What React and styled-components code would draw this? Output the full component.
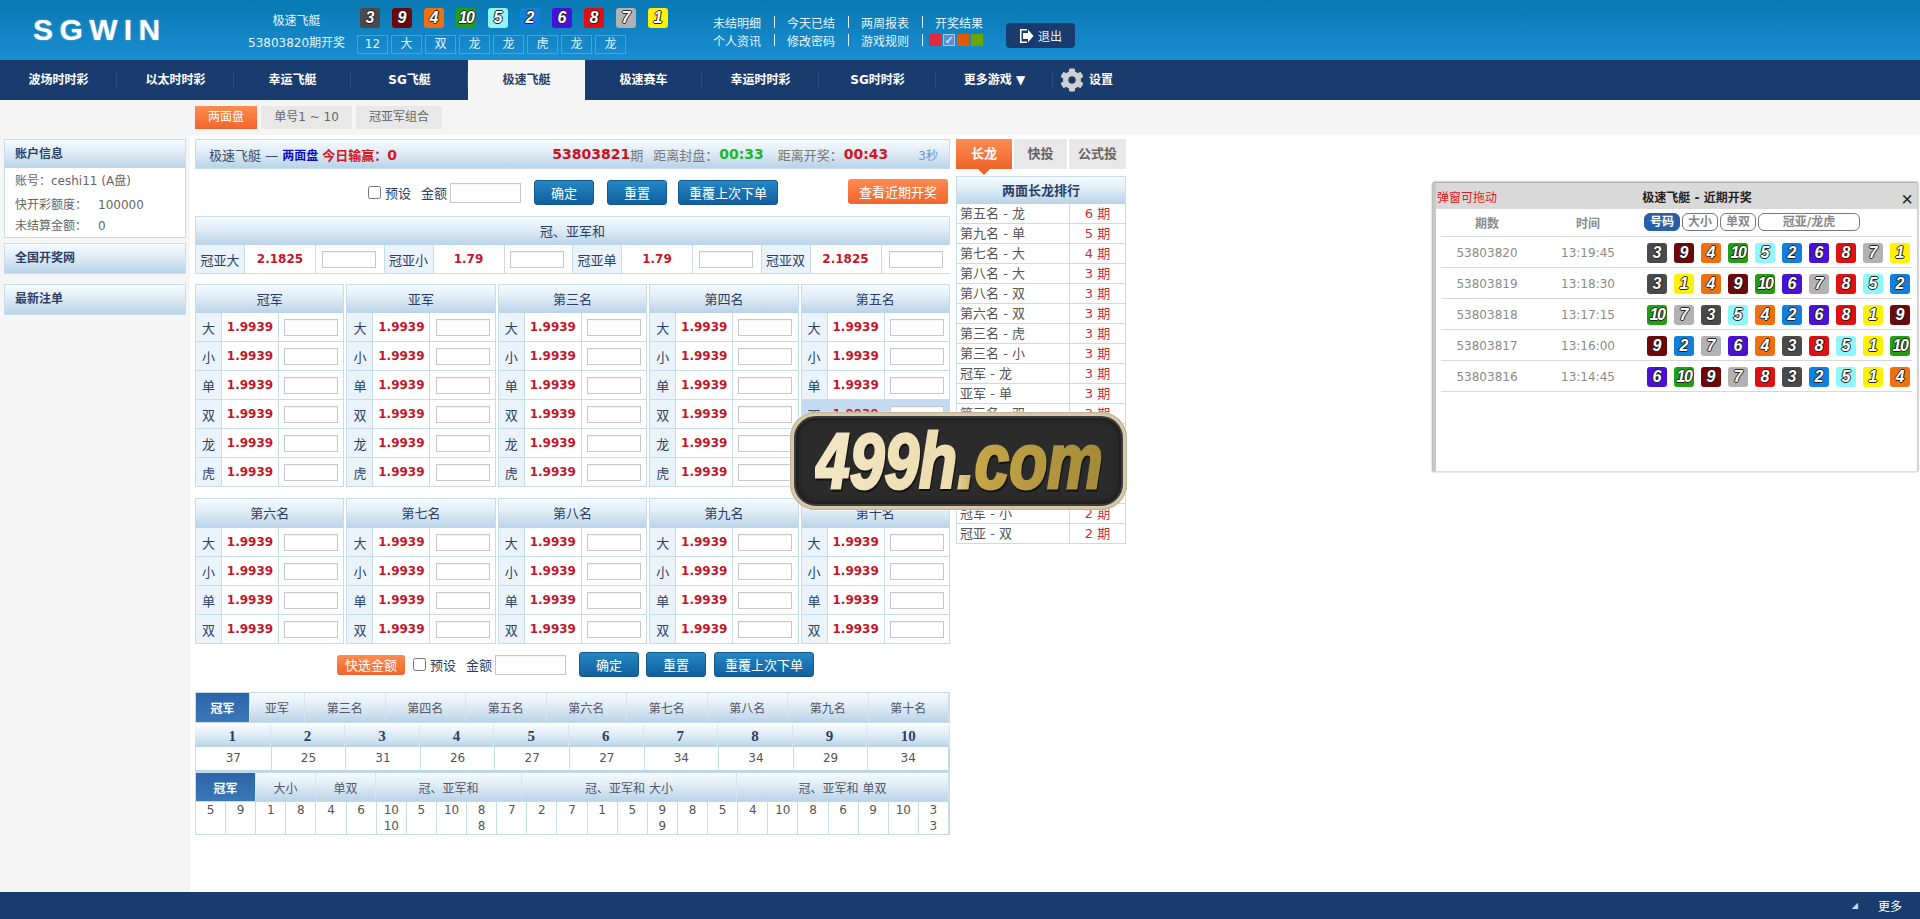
import React from 'react';
import styled, { createGlobalStyle } from 'styled-components';
import { FaCog } from 'react-icons/fa';

const Global = createGlobalStyle`
  html, body { margin: 0; padding: 0; background: #fff; }
  body { font-family: "DejaVu Sans", "Noto Sans CJK SC", sans-serif; font-size: 12px; color: #444; overflow: hidden; }
  * { box-sizing: border-box; }
`;

const HEAD_GRAD = 'linear-gradient(to bottom, #f6fbfe 0%, #dfecf6 45%, #b9d3e8 100%)';
const LINE = '#c5dcea';
const NAVY = '#1a3b6d';
const TITLE = '#2b3f66';
const ODD = '#c4162a';

const Page = styled.div`position: relative; width: 1920px; height: 919px; display: flex; flex-direction: column; overflow: hidden;`;
const TopBar = styled.header`height: 60px; flex: none; display: flex; background: linear-gradient(to bottom, #0778b1, #1b8ed2); color: #e6f4fc;`;
const Logo = styled.div`width: 215px; margin-left: 33px; font: bold 30px/60px "Liberation Sans", sans-serif; letter-spacing: 6.4px; color: #fff; text-shadow: 0 0 2px rgba(255,255,255,.5);`;
const DrawInfo = styled.div`width: 97px; text-align: center; white-space: nowrap; padding-top: 10px; line-height: 22px; font-size: 12px;`;
const DrawBox = styled.div`width: 311px; margin-left: 12px;`;
const BallRow = styled.div`display: flex; gap: 12px; padding: 8px 0 0 3px;`;
const ResultRow = styled.div`display: flex; gap: 3px; margin-top: 7px;`;
const ResultCell = styled.div`width: 31px; height: 19px; border: 1px solid #4aa3d8; text-align: center; line-height: 17px; font-size: 12px;`;
const Links = styled.div`margin-left: 45px; width: 272px; padding-top: 13px;`;
const LinkRow = styled.div`display: flex; align-items: center; height: 18px; font-size: 12px; white-space: nowrap;`;
const Sep = styled.i`width: 1px; height: 12px; background: #dff0fa; margin: 0 12.5px; flex: none;`;
const Swatches = styled.div`display: flex; gap: 2px; margin-left: -6px;`;
const Swatch = styled.span`width: 12px; height: 12px; background: ${p => p.$c}; color: #fff; font-size: 11px; line-height: 12px; text-align: center; border: ${p => p.$on ? '1px solid #a9c9ea' : '0'};`;
const Logout = styled.button`margin: 23px 0 0 21px; width: 69px; height: 25px; border: 0; border-radius: 4px; background: ${NAVY}; color: #e6f4fc; font: 12px "DejaVu Sans","Noto Sans CJK SC",sans-serif; display: flex; align-items: center; justify-content: center; gap: 4px; padding: 0;`;

const Nav = styled.nav`height: 40px; flex: none; display: flex; background: ${NAVY};`;
const NavItem = styled.div`width: 117px; text-align: center; line-height: 40px; font-weight: bold; font-size: 12px; color: ${p => p.$active ? TITLE : '#fff'}; background: ${p => p.$active ? '#f5f5f5' : 'transparent'}; position: relative;
  &::after { content: ''; position: absolute; right: 0; top: 12px; height: 16px; width: 1px; background: ${p => p.$active ? 'transparent' : '#2a4c80'}; }`;
const NavSetting = styled.div`display: flex; align-items: center; gap: 5px; margin-left: 7px; padding-bottom: 1px; color: #fff; font-weight: bold; font-size: 12px;`;
const SettingText = styled.span`margin-top: -2px;`;

const SubBar = styled.div`height: 35px; flex: none; background: #f5f5f5; display: flex; gap: 4px; padding: 6px 0 0 195px;`;
const SubTab = styled.div`height: 23px; width: ${p => p.$w}px; line-height: 23px; text-align: center; font-size: 12px; color: ${p => p.$active ? '#fff' : '#666'}; background: ${p => p.$active ? 'linear-gradient(to bottom,#ff8c50,#f0652c)' : '#e8e8e8'};`;

const Body = styled.div`flex: 1; display: flex; min-height: 0;`;
const Side = styled.aside`width: 190px; flex: none; background: #f5f5f5; padding: 4px 4px 0;`;
const SidePanel = styled.section`margin-bottom: ${p => p.$mb}px; border: 1px solid ${LINE}; background: #fff;`;
const SideHead = styled.div`height: ${p => p.$h}px; line-height: ${p => p.$h}px; padding-left: 10px; background: ${HEAD_GRAD}; color: ${TITLE}; font-weight: bold; font-size: 12px;`;
const SideRow = styled.div`height: ${p => p.$h}px; line-height: ${p => p.$h}px; padding-left: 10px; color: #666; white-space: nowrap;`;
const SideValue = styled.span`margin-left: ${p => p.$ml}px;`;

const Main = styled.main`width: 755px; flex: none; margin-left: 5px; padding-top: 4px;`;
const InfoBar = styled.div`height: 30px; display: flex; align-items: center; padding: 0 11px 0 13px; background: ${HEAD_GRAD}; border: 1px solid ${LINE}; white-space: nowrap; font-size: 13px; color: #3c4c66;`;
const Blue = styled.b`color: #0a0ac8; font-size: 12px; margin: 0 4px;`;
const RedB = styled.b`color: #d81420;`;
const RedBig = styled.span`font-size: 14px;`;
const Period = styled.b`color: #c81420; font-size: 14px; margin-left: auto;`;
const Muted = styled.span`color: #777; font-size: 13px; margin-left: ${p => p.$ml || 0}px;`;
const Clock = styled.b`font-size: 14px; color: ${p => p.$c}; margin: 0 0 0 1px;`;
const Sec = styled.span`color: #6e95d0; font-size: 12px; margin-left: 30px;`;

const Controls = styled.div`display: flex; align-items: center; height: ${p => p.$h}px; padding: ${p => p.$pad}; font-size: 13px; color: ${TITLE}; white-space: nowrap;`;
const Check = styled.input.attrs({ type: 'checkbox' })`margin: 0 4px 0 0; width: 13px; height: 13px;`;
const Amount = styled.span`margin: 0 3px 0 10px;`;
const Field = styled.input`width: ${p => p.$w || 54}px; height: ${p => p.$h || 17}px; padding: 0; border: 1px solid #c8c8c8; background: #fff; box-shadow: inset 0 1px 1px rgba(0,0,0,.05); display: block;`;
const Btn = styled.button`width: ${p => p.$w}px; height: 25px; margin-left: ${p => p.$ml}px; padding: 0; border: 1px solid #14588c; border-radius: 3px; background: linear-gradient(to bottom,#2387c4,#125f9f); color: #fff; font: 13px "DejaVu Sans","Noto Sans CJK SC",sans-serif;`;
const OrangeBtn = styled.button`width: ${p => p.$w}px; height: ${p => p.$h}px; margin: ${p => p.$m}; padding: 0; border: 0; border-radius: 3px; background: linear-gradient(to bottom,#ff8b50,#f0652c); color: #fff; font: 13px "DejaVu Sans","Noto Sans CJK SC",sans-serif;`;

const THead = styled.div`height: ${p => p.$h || 29}px; line-height: ${p => p.$h || 29}px; text-align: center; background: ${HEAD_GRAD}; color: ${TITLE}; font-size: 13px; border: 1px solid ${LINE}; border-bottom: 0;`;
const SumRow = styled.div`display: grid; grid-template-columns: repeat(4, 49px 71px 68.5px); height: 29px; border: 1px solid ${LINE}; border-top: 0;`;
const Label = styled.div`display: flex; align-items: center; justify-content: center; background: #eaf3fa; color: ${TITLE}; font-size: 13px; border-right: 1px solid ${LINE}; white-space: nowrap;`;
const Odds = styled.div`display: flex; align-items: center; justify-content: center; color: ${ODD}; font-weight: bold; font-size: 12px; border-right: 1px solid ${LINE}; background: ${p => p.$hover ? '#c4daf0' : '#fff'};`;
const InputCell = styled.div`display: flex; align-items: center; justify-content: center; padding-right: ${p => p.$end ? 0 : 2}px; border-right: ${p => p.$end ? 0 : `1px solid ${LINE}`}; background: ${p => p.$hover ? '#c4daf0' : '#fff'};`;
const Ranks = styled.div`display: flex; gap: 2px; margin-top: ${p => p.$mt}px;`;
const RankCol = styled.div`flex: 1; min-width: 0;`;
const RankRow = styled.div`display: grid; grid-template-columns: 26px 57px 1fr; height: 29px; border: 1px solid ${LINE}; border-top: 0; ${p => p.$hover ? 'background:#c4daf0;' : ''}`;
const RankLabel = styled(Label)`background: ${p => p.$hover ? '#c4daf0' : '#eaf3fa'};`;

const TabStrip = styled.div`display: grid; grid-template-columns: ${p => p.$cols}; height: ${p => p.$h}px; background: ${HEAD_GRAD}; border: 1px solid ${LINE};`;
const StripTab = styled.div`display: flex; align-items: center; justify-content: center; font-size: 12px; color: ${p => p.$active ? '#fff' : '#556'}; font-weight: ${p => p.$active ? 'bold' : 'normal'}; background: ${p => p.$active ? 'linear-gradient(to bottom,#2c65a8,#3b78b8)' : 'transparent'}; border-right: 1px solid #d5e4f0;`;
const NumHead = styled.div`display: grid; grid-template-columns: 75.6px repeat(8, 74.6px) 1fr; height: 22px; margin-top: 2px; background: ${HEAD_GRAD};`;
const NumCell = styled.div`text-align: center; font: bold 15px/22px "Liberation Serif", serif; color: ${TITLE}; border-right: 1px solid #d5e4f0;`;
const ValRow = styled.div`display: grid; grid-template-columns: 75.6px repeat(8, 74.6px) 1fr; height: 25px; border-bottom: 2px solid #bcd7ec; border-left: 1px solid ${LINE}; border-right: 1px solid ${LINE};`;
const ValCell = styled.div`text-align: center; line-height: 22px; font-size: 12px; color: #555; border-right: 1px solid ${LINE};`;
const Road = styled.div`display: grid; grid-template-columns: repeat(25, 1fr); height: 33px; border: 1px solid ${LINE}; border-top: 0;`;
const RoadCell = styled.div`text-align: center; line-height: 16px; font-size: 12px; color: #555; border-right: 1px solid ${LINE}; white-space: pre-line;`;

const Right = styled.aside`width: 170px; flex: none; margin-left: 6px; padding-top: 4px;`;
const RightTabs = styled.div`display: flex; gap: 2px; height: 30px; margin-bottom: 7px;`;
const RightTab = styled.div`position: relative; width: ${p => p.$w}px; line-height: 30px; text-align: center; font-weight: bold; font-size: 13px; color: ${p => p.$active ? '#fff' : '#666'}; background: ${p => p.$active ? 'linear-gradient(to bottom,#ff8c50,#ef642b)' : '#e8e8e8'};
  ${p => p.$active ? `&::after { content:''; position:absolute; left:50%; bottom:-6px; margin-left:-6px; border:6px solid transparent; border-bottom:0; border-top-color:#ef642b; }` : ''}`;
const RightHead = styled(THead)`font-weight: bold; height: 28px; line-height: 28px;`;
const LongRow = styled.div`display: grid; grid-template-columns: 113px 1fr; height: 20px; line-height: 19px; border: 1px solid ${LINE}; border-top: 0; font-size: 13px;`;
const LongName = styled.div`padding-left: 3px; color: #555; border-right: 1px solid ${LINE}; white-space: nowrap;`;
const LongVal = styled.div`text-align: center; color: #c83040;`;

const Foot = styled.footer`height: 27px; flex: none; background: ${NAVY}; color: #fff; display: flex; align-items: center; justify-content: flex-end; padding-right: 18px; font-size: 12px;`;
const FootMark = styled.span`margin-right: 20px; color: #cfe0f0; font-size: 8px;`;

const BALL = { 1:'#fff200', 2:'#0f7fe0', 3:'#4a4a4a', 4:'#f07010', 5:'#8ff6fb', 6:'#4a10d8', 7:'#b2b2b2', 8:'#e01010', 9:'#6e0808', 10:'#20a010' };
const Ball = styled.span`width: 20px; height: 20px; flex: none; border-radius: 3px; background: ${p => BALL[p.$n]}; color: #fff; text-align: center;
  font: italic bold 16px/20px "Liberation Sans", sans-serif; letter-spacing: ${p => p.$n === 10 ? '-1.5px' : 0};
  text-shadow: 1px 0 0 #222, -1px 0 0 #222, 0 1px 0 #222, 0 -1px 0 #222;`;

const Popup = styled.div`position: absolute; left: 1433px; top: 183px; width: 485px; height: 289px; background: #fff; border-left: 3px solid #c8c8c8; border-right: 1px solid #ccc; border-bottom: 1px solid #ddd; box-shadow: 0 -1px 2px rgba(0,0,0,.4), -1px 0 2px rgba(0,0,0,.2);`;
const PopTitle = styled.div`display: grid; grid-template-columns: 1fr auto 1fr; align-items: center; height: 26px; background: #d9d9d9; padding: 0 4px 0 1px;`;
const PopDrag = styled.span`color: #e02020; font-size: 12px;`;
const PopName = styled.b`color: #222; font-size: 12px; margin: 0 -7px 0 37px;`;
const PopClose = styled.span`justify-self: end; color: #222; font: 20px/20px "Liberation Sans", sans-serif; margin-top: 6px;`;
const PopGrid = styled.div`margin: 0 5px;`;
const PopLine = styled.div`display: flex; align-items: center; height: ${p => p.$h}px; padding-top: ${p => p.$pt || 0}px; border-bottom: 1px solid #d8d8d8;`;
const PopPeriod = styled.div`width: 92px; flex: none; text-align: center; color: #8a8a8a; font-weight: ${p => p.$b ? 'bold' : 'normal'};`;
const PopTime = styled.div`width: 110px; flex: none; text-align: center; color: #8a8a8a; font-weight: ${p => p.$b ? 'bold' : 'normal'};`;
const PopBalls = styled.div`display: flex; gap: 7px; margin-left: 4px;`;
const PopBtns = styled.div`display: flex; gap: 2px; margin: -1px 0 0 1px;`;
const PopBtn = styled.div`width: ${p => p.$w}px; height: 18px; line-height: 16px; border: 1px solid ${p => p.$active ? '#2a5fa8' : '#777'}; border-radius: 6px; text-align: center; font-size: 12px; font-weight: bold; color: ${p => p.$active ? '#fff' : '#888'}; background: ${p => p.$active ? '#2a5fa8' : '#fff'};`;

const Mark = styled.div`position: absolute; left: 790px; top: 412px; width: 337px; height: 98px; border-radius: 26px; background: #d9c9ac; padding: 4px; box-shadow: 0 0 2px #fff, inset 0 0 2px #8c7a5c;`;
const MarkInner = styled.div`width: 100%; height: 100%; border-radius: 22px; background: #2b2b2b; border: 2px solid #3c3c3c; box-shadow: inset 0 0 6px #111; display: flex; align-items: center; justify-content: center; overflow: hidden;`;
const MarkText = styled.span`display: block; white-space: nowrap; font: italic bold 78px/90px "Liberation Sans", sans-serif; transform: scaleX(.8); -webkit-text-stroke: 3px transparent; background: linear-gradient(90deg,#f3e6c4 0%,#ecdcae 48%,#c5a648 56%,#a48a38 100%); -webkit-background-clip: text; background-clip: text; color: transparent; filter: drop-shadow(1px 2px 0 #111);`;

const Odd = '1.9939';
const Rank = ({ name, rows, headH, hoverIdx }) => (
  <RankCol>
    <THead $h={headH}>{name}</THead>
    {rows.map((r, i) => (
      <RankRow key={r} $hover={hoverIdx === i}>
        <RankLabel $hover={hoverIdx === i}>{r}</RankLabel>
        <Odds $hover={hoverIdx === i}>{Odd}</Odds>
        <InputCell $end $hover={hoverIdx === i}><Field /></InputCell>
      </RankRow>
    ))}
  </RankCol>
);

const six = ['大','小','单','双','龙','虎'];
const four = ['大','小','单','双'];
const long = [['第五名 - 龙',6],['第九名 - 单',5],['第七名 - 大',4],['第八名 - 大',3],['第八名 - 双',3],['第六名 - 双',3],['第三名 - 虎',3],['第三名 - 小',3],['冠军 - 龙',3],['亚军 - 单',3],['第三名 - 双',3],['第四名 - 大',2],['第四名 - 龙',2],['第六名 - 小',2],['亚军 - 虎',2],['冠军 - 小',2],['冠亚 - 双',2]];
const draws = [
  ['53803820','13:19:45',[3,9,4,10,5,2,6,8,7,1]],
  ['53803819','13:18:30',[3,1,4,9,10,6,7,8,5,2]],
  ['53803818','13:17:15',[10,7,3,5,4,2,6,8,1,9]],
  ['53803817','13:16:00',[9,2,7,6,4,3,8,5,1,10]],
  ['53803816','13:14:45',[6,10,9,7,8,3,2,5,1,4]],
];
const road = ['5','9','1','8','4','6','10\n10','5','10','8\n8','7','2','7','1','5','9\n9','8','5','4','10','8','6','9','10','3\n3'];
const sumCells = [['冠亚大','2.1825'],['冠亚小','1.79'],['冠亚单','1.79'],['冠亚双','2.1825']];

const ExitIcon = () => (
  <svg width="15" height="16" viewBox="0 0 15 16"><path d="M1 1h7v1.5H2.5v11H8V15H1z" fill="#fff" /><path d="M4 5h5V1.5L14.5 8 9 14.500V11H4z" fill="#fff" /></svg>
);

export default function App() {
  return (
    <Page>
      <Global />
      <TopBar>
        <Logo>SGWIN</Logo>
        <DrawInfo>极速飞艇<br />53803820期开奖</DrawInfo>
        <DrawBox>
          <BallRow>{[3,9,4,10,5,2,6,8,7,1].map(n => <Ball key={n} $n={n}>{n}</Ball>)}</BallRow>
          <ResultRow>{['12','大','双','龙','龙','虎','龙','龙'].map((t, i) => <ResultCell key={i}>{t}</ResultCell>)}</ResultRow>
        </DrawBox>
        <Links>
          <LinkRow>未结明细<Sep />今天已结<Sep />两周报表<Sep />开奖结果</LinkRow>
          <LinkRow>个人资讯<Sep />修改密码<Sep />游戏规则<Sep />
            <Swatches>
              <Swatch $c="#e0283e" />
              <Swatch $c="#5b8fd0" $on>✓</Swatch>
              <Swatch $c="#e05a00" />
              <Swatch $c="#6aa800" />
            </Swatches>
          </LinkRow>
        </Links>
        <Logout><ExitIcon />退出</Logout>
      </TopBar>
      <Nav>
        {['波场时时彩','以太时时彩','幸运飞艇','SG飞艇','极速飞艇','极速赛车','幸运时时彩','SG时时彩','更多游戏 ▼'].map(t => (
          <NavItem key={t} $active={t === '极速飞艇'}>{t}</NavItem>
        ))}
        <NavSetting><FaCog size={24} color="#d0d0d0" /><SettingText>设置</SettingText></NavSetting>
      </Nav>
      <SubBar>
        <SubTab $active $w={62}>两面盘</SubTab>
        <SubTab $w={91}>单号1 ~ 10</SubTab>
        <SubTab $w={86}>冠亚军组合</SubTab>
      </SubBar>
      <Body>
        <Side>
          <SidePanel $mb={5}>
            <SideHead $h={28}>账户信息</SideHead>
            <SideRow $h={26}>账号：ceshi11 (A盘)</SideRow>
            <SideRow $h={22}>快开彩额度：<SideValue $ml={11}>100000</SideValue></SideRow>
            <SideRow $h={21}>未结算金额：<SideValue $ml={11}>0</SideValue></SideRow>
          </SidePanel>
          <SidePanel $mb={10}><SideHead $h={29}>全国开奖网</SideHead></SidePanel>
          <SidePanel $mb={0}><SideHead $h={29}>最新注单</SideHead></SidePanel>
        </Side>
        <Main>
          <InfoBar>
            极速飞艇 — <Blue>两面盘</Blue><RedB>今日输赢：<RedBig>0</RedBig></RedB>
            <Period>53803821</Period><Muted>期</Muted>
            <Muted $ml={10}>距离封盘：</Muted><Clock $c="#1fb52c">00:33</Clock>
            <Muted $ml={14}>距离开奖：</Muted><Clock $c="#d81420">00:43</Clock>
            <Sec>3秒</Sec>
          </InfoBar>
          <Controls $h={47} $pad="0 0 0 173px">
            <Check />预设<Amount>金额</Amount><Field $w={71} $h={20} />
            <Btn $w={60} $ml={13}>确定</Btn>
            <Btn $w={60} $ml={13}>重置</Btn>
            <Btn $w={100} $ml={11}>重覆上次下单</Btn>
            <OrangeBtn $w={100} $h={25} $m="-2px 2px 0 auto">查看近期开奖</OrangeBtn>
          </Controls>
          <THead>冠、亚军和</THead>
          <SumRow>
            {sumCells.map(([l, o], i) => (
              <React.Fragment key={l}>
                <Label>{l}</Label>
                <Odds>{o}</Odds>
                <InputCell $end={i === 3}><Field /></InputCell>
              </React.Fragment>
            ))}
          </SumRow>
          <Ranks $mt={10}>
            {['冠军','亚军','第三名','第四名','第五名'].map((n, i) => <Rank key={n} name={n} rows={six} hoverIdx={i === 4 ? 3 : -1} />)}
          </Ranks>
          <Ranks $mt={11}>
            {['第六名','第七名','第八名','第九名','第十名'].map(n => <Rank key={n} name={n} rows={four} headH={30} />)}
          </Ranks>
          <Controls $h={48} $pad="0 0 7px 142px">
            <OrangeBtn $w={68} $h={20} $m="0 8px 0 0">快选金额</OrangeBtn>
            <Check />预设<Amount>金额</Amount><Field $w={71} $h={20} />
            <Btn $w={60} $ml={13}>确定</Btn>
            <Btn $w={60} $ml={7}>重置</Btn>
            <Btn $w={100} $ml={8}>重覆上次下单</Btn>
          </Controls>
          <TabStrip $h={31} $cols="54px 55px repeat(8, 1fr)">
            {['冠军','亚军','第三名','第四名','第五名','第六名','第七名','第八名','第九名','第十名'].map((t, i) => <StripTab key={t} $active={i === 0}>{t}</StripTab>)}
          </TabStrip>
          <NumHead>{[1,2,3,4,5,6,7,8,9,10].map(n => <NumCell key={n}>{n}</NumCell>)}</NumHead>
          <ValRow>{[37,25,31,26,27,27,34,34,29,34].map((n, i) => <ValCell key={i}>{n}</ValCell>)}</ValRow>
          <TabStrip $h={30} $cols="60px 60px 60px 146px 215px 1fr">
            {['冠军','大小','单双','冠、亚军和','冠、亚军和 大小','冠、亚军和 单双'].map((t, i) => <StripTab key={t} $active={i === 0}>{t}</StripTab>)}
          </TabStrip>
          <Road>{road.map((t, i) => <RoadCell key={i}>{t}</RoadCell>)}</Road>
        </Main>
        <Right>
          <RightTabs>
            <RightTab $active $w={56}>长龙</RightTab>
            <RightTab $w={53}>快投</RightTab>
            <RightTab $w={57}>公式投</RightTab>
          </RightTabs>
          <RightHead>两面长龙排行</RightHead>
          {long.map(([n, v], i) => (
            <LongRow key={i}><LongName>{n}</LongName><LongVal>{v} 期</LongVal></LongRow>
          ))}
        </Right>
      </Body>
      <Foot><FootMark>◢</FootMark>更多</Foot>
      <Popup>
        <PopTitle>
          <PopDrag>弹窗可拖动</PopDrag>
          <PopName>极速飞艇 - 近期开奖</PopName>
          <PopClose>×</PopClose>
        </PopTitle>
        <PopGrid>
          <PopLine $h={28}>
            <PopPeriod $b>期数</PopPeriod>
            <PopTime $b>时间</PopTime>
            <PopBtns>
              <PopBtn $active $w={36}>号码</PopBtn>
              <PopBtn $w={36}>大小</PopBtn>
              <PopBtn $w={36}>单双</PopBtn>
              <PopBtn $w={102}>冠亚/龙虎</PopBtn>
            </PopBtns>
          </PopLine>
          {draws.map(([p, t, b]) => (
            <PopLine $h={31} $pt={1} key={p}>
              <PopPeriod>{p}</PopPeriod>
              <PopTime>{t}</PopTime>
              <PopBalls>{b.map(n => <Ball key={n} $n={n}>{n}</Ball>)}</PopBalls>
            </PopLine>
          ))}
        </PopGrid>
      </Popup>
      <Mark><MarkInner><MarkText>499h.com</MarkText></MarkInner></Mark>
    </Page>
  );
}
